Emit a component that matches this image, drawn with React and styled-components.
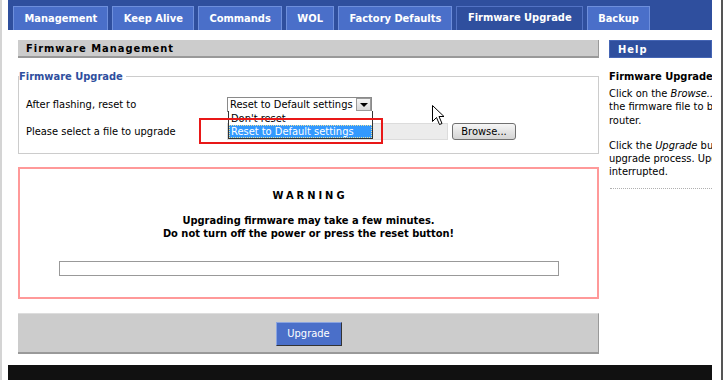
import React from 'react'
import styled, { createGlobalStyle } from 'styled-components'

const font = `"DejaVu Sans Condensed", "DejaVu Sans", Tahoma, sans-serif`

const GlobalStyle = createGlobalStyle`
  html, body {
    margin: 0;
    padding: 0;
    background: #fff;
  }
  body {
    font-family: ${font};
    font-size: 11px;
    color: #000;
  }
`

const Window = styled.div`
  width: 723px;
  height: 380px;
  box-sizing: border-box;
  border-left: 2px solid #d4d4d4;
  border-right: 2px solid #555;
  padding: 0 9px 0 6px;
  overflow: hidden;
  display: flex;
  flex-direction: column;
`

const TabBar = styled.div`
  height: 30px;
  flex: none;
  background: #2f4f9e;
  display: flex;
  align-items: flex-end;
  gap: 4px;
  padding: 0 5px;
`

const Tab = styled.div`
  height: 24px;
  box-sizing: border-box;
  padding: 0 10px 0 10.5px;
  border: 1px solid ${p => (p.$active ? '#5373c4' : '#6e8fdc')};
  border-bottom: 0;
  background: ${p => (p.$active ? '#2f4f9e' : '#4a6fc9')};
  color: #fff;
  font-weight: bold;
  font-size: 11px;
  line-height: ${p => (p.$active ? '22px' : '24px')};
  white-space: nowrap;
`

const Content = styled.div`
  height: 335px;
  flex: none;
  box-sizing: border-box;
  display: flex;
  gap: 10px;
  padding: 10px 0 0 10px;
`

const Main = styled.div`
  width: 581px;
  flex: none;
  display: flex;
  flex-direction: column;
`

const SectionHeader = styled.div`
  height: 18px;
  box-sizing: border-box;
  background: #cccccc;
  border-right: 1px solid #999;
  border-bottom: 2px solid #999;
  padding: 1px 0 0 8px;
  font-weight: bold;
  letter-spacing: 1px;
  line-height: 16px;
`

const Fieldset = styled.fieldset`
  margin: 12px 0 0;
  padding: 0;
  border: 1px solid #cccccc;
  min-width: 0;
`

const Legend = styled.legend`
  padding: 0 3px 0 0;
  color: #2f4f9e;
  font-weight: bold;
  line-height: 13px;
`

const Rows = styled.div`
  display: flex;
  flex-direction: column;
  gap: 11px;
  padding: 14px 7px 13px;
`

const Row = styled.div`
  position: relative;
  display: grid;
  grid-template-columns: 201px auto;
  align-items: center;
`

const SelectBox = styled.div`
  position: relative;
  width: 145px;
  height: 15px;
  box-sizing: border-box;
  border: 1px solid #8a8a8a;
  background: #fff;
  display: flex;
  align-items: center;
  padding-left: 2px;
  line-height: 13px;
`

const ArrowButton = styled.div`
  margin-left: auto;
  width: 15px;
  height: 13px;
  box-sizing: border-box;
  border: 1px solid #9a9a9a;
  background: linear-gradient(#f4f4f4, #d8d8d8);
  display: flex;
  align-items: center;
  justify-content: center;
  &::after {
    content: '';
    border-left: 4px solid transparent;
    border-right: 4px solid transparent;
    border-top: 4px solid #000;
  }
`

const DropList = styled.div`
  position: absolute;
  top: 100%;
  left: 0;
  width: 145px;
  box-sizing: border-box;
  border: 1px solid #333;
  border-top: 0;
  background: #fff;
  z-index: 2;
`

const Option = styled.div`
  height: ${p => (p.$selected ? '13px' : '14px')};
  box-sizing: border-box;
  line-height: ${p => (p.$selected ? '13px' : '15px')};
  padding-left: 2px;
  background: ${p => (p.$selected ? '#3399ff' : '#fff')};
  color: ${p => (p.$selected ? '#fff' : '#000')};
  outline: ${p => (p.$selected ? '1px dotted #e6e0a0' : 'none')};
  outline-offset: -1px;
`

const FileField = styled.div`
  display: flex;
  align-items: center;
  gap: 4px;
`

const FileBox = styled.div`
  width: 221px;
  height: 17px;
  box-sizing: border-box;
  background: #ececec;
  border: 1px solid #dcdcdc;
`

const BrowseButton = styled.button`
  width: 64px;
  height: 17px;
  box-sizing: border-box;
  padding: 0;
  border: 1px solid #707070;
  border-radius: 3px;
  background: linear-gradient(#f6f6f6, #e4e4e4 50%, #d4d4d4);
  font-family: ${font};
  font-size: 11px;
  line-height: 14px;
  color: #000;
`

const Annotation = styled.div`
  position: absolute;
  left: 173px;
  top: -5px;
  width: 184px;
  height: 26px;
  box-sizing: border-box;
  border: 2px solid #e81818;
  z-index: 3;
`

const Cursor = styled.svg`
  position: absolute;
  left: 406px;
  top: 8px;
  z-index: 4;
`

const WarningBox = styled.div`
  margin-top: 13px;
  border: 2px solid #ff9999;
  height: 132px;
  box-sizing: border-box;
  padding-top: 20px;
  display: flex;
  flex-direction: column;
  align-items: center;
`

const WarningTitle = styled.div`
  font-weight: bold;
  letter-spacing: 3px;
  line-height: 13px;
  padding-left: 3px;
`

const WarningText = styled.div`
  margin-top: 12px;
  font-weight: bold;
  text-align: center;
  line-height: 13px;
`

const ProgressBar = styled.div`
  margin-top: 21px;
  width: 500px;
  height: 15px;
  box-sizing: border-box;
  border: 1px solid #999;
  background: #fff;
`

const ButtonPanel = styled.div`
  margin-top: 14px;
  height: 41px;
  box-sizing: border-box;
  background: #cccccc;
  border-top: 1px solid #dddddd;
  border-right: 1px solid #999;
  border-bottom: 2px solid #999;
  display: flex;
  align-items: center;
  justify-content: center;
`

const UpgradeButton = styled.button`
  width: 66px;
  height: 24px;
  box-sizing: border-box;
  margin-left: 1px;
  margin-top: 1px;
  padding: 0;
  background: #4a6fc9;
  border: 1px solid;
  border-color: #8aa4e0 #333 #333 #8aa4e0;
  color: #fff;
  font-family: ${font};
  font-size: 11px;
`

const Help = styled.div`
  width: 103px;
  flex: none;
  overflow: hidden;
`

const HelpHeader = styled.div`
  height: 18px;
  box-sizing: border-box;
  background: #2f4f9e;
  border: 1px solid #4565b4;
  color: #fff;
  font-weight: bold;
  letter-spacing: 1px;
  padding: 1px 0 0 8px;
  line-height: 16px;
`

const HelpTitle = styled.div`
  margin-top: 12px;
  font-weight: bold;
  line-height: 13px;
  white-space: nowrap;
`

const HelpText = styled.p`
  margin: ${p => (p.$first ? '4px' : '12px')} 0 0;
  line-height: 13.3px;
  white-space: nowrap;
`

const Divider = styled.div`
  margin-top: 9px;
  margin-left: 1px;
  border-top: 1px dotted #b0b0b0;
`

const Footer = styled.div`
  flex: 1;
  background: #111;
`

const tabs = ['Management', 'Keep Alive', 'Commands', 'WOL', 'Factory Defaults', 'Firmware Upgrade', 'Backup']

export default function App() {
  return (
    <>
      <GlobalStyle />
      <Window>
        <TabBar>
          {tabs.map(t => (
            <Tab key={t} $active={t === 'Firmware Upgrade'}>{t}</Tab>
          ))}
        </TabBar>
        <Content>
          <Main>
            <SectionHeader>Firmware Management</SectionHeader>
            <Fieldset>
              <Legend>Firmware Upgrade</Legend>
              <Rows>
                <Row>
                  <span>After flashing, reset to</span>
                  <SelectBox>
                    Reset to Default settings
                    <ArrowButton />
                    <DropList>
                      <Option>Don't reset</Option>
                      <Option $selected>Reset to Default settings</Option>
                    </DropList>
                  </SelectBox>
                  <Cursor width="13" height="21" viewBox="0 0 13 21">
                    <path d="M0.5 0.5 L0.5 16.5 L4.5 12.5 L7.5 19.5 L10 18.5 L7 11.5 L12 11.5 Z" fill="#fff" stroke="#000" strokeWidth="1" />
                  </Cursor>
                </Row>
                <Row>
                  <span>Please select a file to upgrade</span>
                  <FileField>
                    <FileBox />
                    <BrowseButton>Browse...</BrowseButton>
                  </FileField>
                  <Annotation />
                </Row>
              </Rows>
            </Fieldset>
            <WarningBox>
              <WarningTitle>WARNING</WarningTitle>
              <WarningText>
                Upgrading firmware may take a few minutes.<br />
                Do not turn off the power or press the reset button!
              </WarningText>
              <ProgressBar />
            </WarningBox>
            <ButtonPanel>
              <UpgradeButton>Upgrade</UpgradeButton>
            </ButtonPanel>
          </Main>
          <Help>
            <HelpHeader>Help</HelpHeader>
            <HelpTitle>Firmware Upgrade</HelpTitle>
            <HelpText $first>
              Click on the <i>Browse...</i> button to select<br />
              the firmware file to be uploaded to the<br />
              router.
            </HelpText>
            <HelpText>
              Click the <i>Upgrade</i> button to start the<br />
              upgrade process. Upgrade must not be<br />
              interrupted.
            </HelpText>
            <Divider />
          </Help>
        </Content>
        <Footer />
      </Window>
    </>
  )
}
